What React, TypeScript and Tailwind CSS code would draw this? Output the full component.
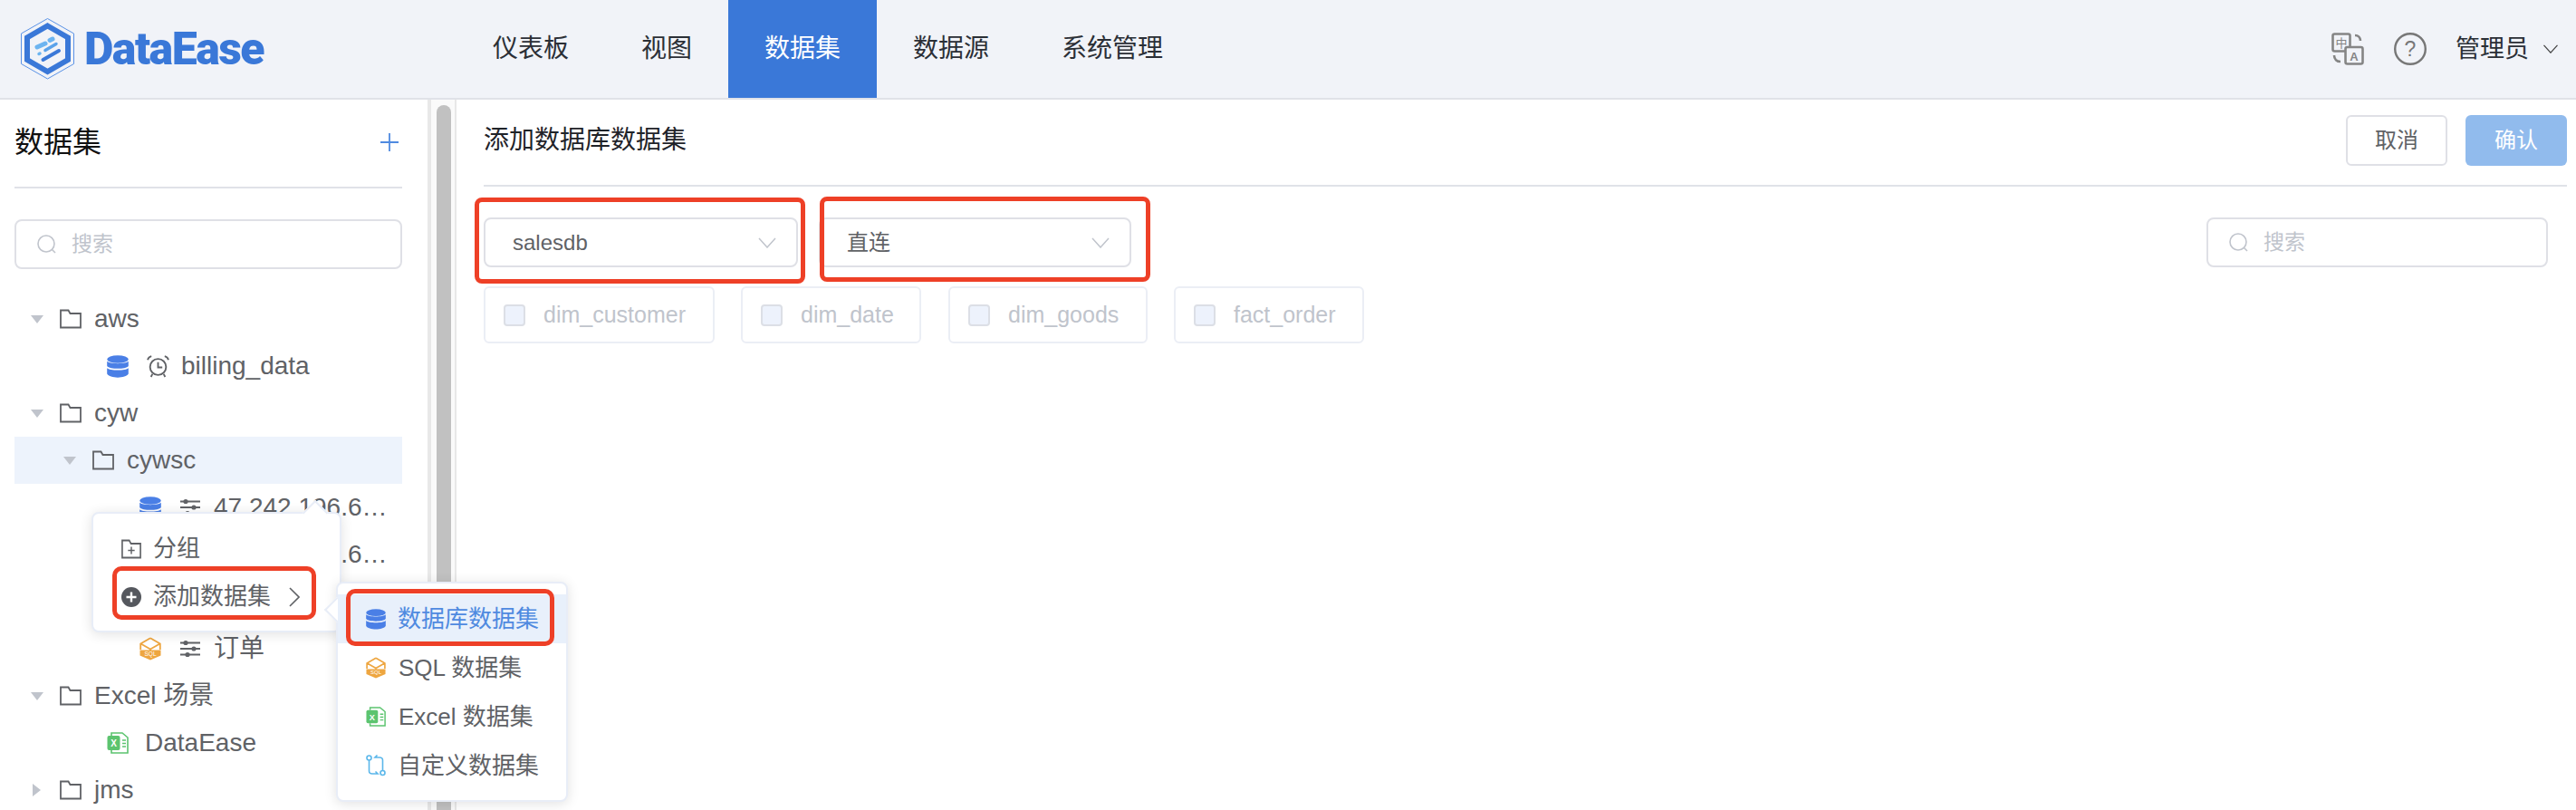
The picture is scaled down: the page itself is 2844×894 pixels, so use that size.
import React from "react";

const Folder = ({ plus = false, w = 24 }: { plus?: boolean; w?: number }) => (
  <svg width={w} height="22" viewBox="0 0 24 22" preserveAspectRatio="none" fill="none" className="shrink-0">
    <path d="M1 20.500V1.500H9.500L11.500 5H23V20.500H1Z" stroke="#606266" strokeWidth="1.800" />
    {plus && <path d="M8 12.500H16M12 8.500V16.500" stroke="#606266" strokeWidth="1.600" />}
  </svg>
);

const Db = ({ size = 24 }: { size?: number }) => (
  <svg width={size} height={size + 1} viewBox="0 0 24 25" className="shrink-0">
    <ellipse cx="12" cy="4.500" rx="11.800" ry="4.300" fill="#4a7fe6" />
    <path d="M.2 6.800C3 10 21 10 23.800 6.800V12C21 15.800 3 15.800 .2 12Z" fill="#4a7fe6" />
    <path d="M.2 14.200C3 17.400 21 17.400 23.800 14.200V20.500C21 26 3 26 .2 20.500Z" fill="#4a7fe6" />
  </svg>
);

const Alarm = () => (
  <svg width="25" height="25" viewBox="0 0 24 24" fill="none" stroke="#606266" strokeWidth="1.800" className="shrink-0">
    <circle cx="12" cy="12.500" r="8.500" />
    <path d="M12 7.500V13H16.500M1 5C1.500 2.500 3 1.500 5 1M23 5C22.500 2.500 21 1.500 19 1M6 20L4.500 23M18 20L19.500 23" />
  </svg>
);

const Sliders = () => (
  <svg width="24" height="20" viewBox="0 0 24 20" fill="none" className="shrink-0">
    <path d="M1 3.500H23M1 10H23M1 16.500H23" stroke="#606266" strokeWidth="1.800" />
    <circle cx="7" cy="3.500" r="2.600" fill="#606266" />
    <circle cx="16" cy="10" r="2.600" fill="#606266" />
    <circle cx="9" cy="16.500" r="2.600" fill="#606266" />
  </svg>
);

const Sql = ({ size = 24 }: { size?: number }) => (
  <svg width={size} height={size + 2} viewBox="0 0 24 26" className="shrink-0">
    <path d="M12 1.200L22.800 7.500V14M1.200 14V7.500L12 1.200M1.500 7.500L12 13.500L22.500 7.500M12 13.500V16" fill="none" stroke="#eea640" strokeWidth="1.800" />
    <path d="M.5 14.500H23.500V20.500L12 25.500L.5 20.500Z" fill="#eea640" />
    <text x="12" y="20.500" textAnchor="middle" fontSize="6.500" fontFamily="Liberation Sans" fill="#fff">SQL</text>
  </svg>
);

const Excel = ({ size = 24 }: { size?: number }) => (
  <svg width={size} height={size + 2} viewBox="0 0 24 26" fill="none" className="shrink-0">
    <path d="M5 5V2H17L23 7V24H5V21" stroke="#5cc46f" strokeWidth="1.600" />
    <rect x=".5" y="5" width="14" height="16" rx="2" fill="#5cc46f" />
    <text x="7.500" y="17" textAnchor="middle" fontSize="10" fontWeight="700" fontFamily="Liberation Sans" fill="#fff">X</text>
    <path d="M17 10H21M17 13.500H21M17 17H21" stroke="#5cc46f" strokeWidth="1.500" />
  </svg>
);

const Custom = () => (
  <svg width="22" height="24" viewBox="0 0 22 24" fill="none" stroke="#5bb7ea" strokeWidth="1.600" className="shrink-0">
    <circle cx="3.500" cy="3.500" r="2.500" />
    <circle cx="18.500" cy="20" r="2.500" />
    <path d="M3.500 6V18C3.500 20 5 21 7 21H13L10.500 18.500M18.500 17.500V6C18.500 4 17 3 15 3H10L12.500 .5" />
  </svg>
);

const Tri = ({ right = false }: { right?: boolean }) =>
  right ? (
    <svg width="14" height="18" viewBox="0 0 14 18" className="shrink-0"><path d="M2 2L11 9L2 16Z" fill="#c0c4cc" /></svg>
  ) : (
    <svg width="14" height="9" viewBox="0 0 14 9" className="shrink-0"><path d="M0 0H14L7 9Z" fill="#c0c4cc" /></svg>
  );

const Chevron = ({ color = "#c0c4cc", w = 20, h = 12 }: { color?: string; w?: number; h?: number }) => (
  <svg width={w} height={h} viewBox="0 0 20 12" fill="none" className="shrink-0">
    <path d="M1 1L10 11L19 1" stroke={color} strokeWidth="1.500" />
  </svg>
);

const Search = ({ className }: { className: string }) => (
  <div className={`flex h-[55px] items-center rounded-lg border-2 border-[#dfe0e6] bg-white pl-[23px] ${className}`}>
    <svg width="21" height="21" viewBox="0 0 21 21" fill="none" stroke="#c0c4cc" strokeWidth="1.600" className="shrink-0">
      <circle cx="10" cy="10" r="9" />
      <path d="M16.500 16.500L20 20" />
    </svg>
    <span className="ml-[17px] text-[23px] text-[#c0c4cc]">搜索</span>
  </div>
);

const Select = ({ label, className }: { label: string; className: string }) => (
  <div className={`flex h-[55px] items-center justify-between rounded-lg border-2 border-[#dfe0e6] bg-white pr-[22px] text-[24px] text-[#606266] ${className}`}>
    <span>{label}</span>
    <Chevron />
  </div>
);

const Card = ({ label, className }: { label: string; className: string }) => (
  <div className={`flex h-[63px] items-center rounded-md border-2 border-[#ebeef5] pl-5 ${className}`}>
    <span className="h-6 w-6 shrink-0 rounded border-2 border-[#dcdfe6] bg-[#edf2fc]" />
    <span className="ml-[20px] text-[25px] text-[#c0c4cc]">{label}</span>
  </div>
);

const Row = ({ children, active = false, className = "" }: { children: React.ReactNode; active?: boolean; className?: string }) => (
  <div className={`flex h-[52px] items-center whitespace-nowrap text-[28px] text-[#606266] ${active ? "bg-[#edf3fc]" : ""} ${className}`}>
    {children}
  </div>
);

const nav = [
  { t: "仪表板", w: "w-[164px]" },
  { t: "视图", w: "w-[136px]" },
  { t: "数据集", w: "w-[164px]", on: true },
  { t: "数据源", w: "w-[164px]" },
  { t: "系统管理", w: "w-[192px]" },
];

export default function App() {
  return (
    <div className="relative flex h-[894px] w-[2844px] flex-col overflow-hidden bg-white font-['Liberation_Sans','Noto_Sans_CJK_SC',sans-serif]">
      <header className="flex h-[110px] shrink-0 items-stretch border-b-2 border-[#e0e2e8] bg-[#f1f3f8]">
        <div className="flex w-[504px] shrink-0 items-center pl-[22px]">
          <svg width="62" height="70" viewBox="22 16 62 70" fill="none" className="shrink-0">
            <path d="M52.500 17.500L81.500 34V67.500L52.500 84L23.500 67.500V34Z" stroke="#5a92e6" strokeWidth="1" />
            <path d="M52.500 25.500L75 38.500V63L52.500 76L30 63V38.500Z" stroke="#3a78d8" strokeWidth="6" />
            <path d="M41 49L50 45M55 41.500L58 40" stroke="#6cb4f0" strokeWidth="5" strokeLinecap="round" />
            <path d="M50 52.500L62 45.500" stroke="#5aa2ea" strokeWidth="3.500" strokeLinecap="round" />
            <path d="M43 56.500L44 56" stroke="#6cb4f0" strokeWidth="3.500" strokeLinecap="round" />
            <path d="M47.500 63L65 53" stroke="#3a78d8" strokeWidth="4" strokeLinecap="round" />
          </svg>
          <span className="ml-[9px] font-['Roboto'] text-[50px] font-black leading-none tracking-[-1.5px] text-[#3a78d8]">DataEase</span>
        </div>
        <nav className="flex text-[28px] text-[#2b2f36]">
          {nav.map((n) => (
            <div key={n.t} className={`flex items-center justify-center ${n.w} ${n.on ? "bg-[#3a78d8] text-white" : ""}`}>
              {n.t}
            </div>
          ))}
        </nav>
        <div className="ml-auto flex items-center pr-[19px]">
          <svg width="36" height="36" viewBox="0 0 36 36" fill="none" stroke="#858585" strokeWidth="2.600" className="shrink-0">
            <rect x="1.500" y="1.500" width="19" height="19" rx="2" />
            <rect x="15.500" y="16" width="19" height="18.500" rx="2" fill="#f1f3f8" />
            <path d="M26 3C29.500 3 32 5.500 32 9M3 25C3 29.500 6 32 10 32" />
            <text x="11" y="16" textAnchor="middle" fontSize="13" fontFamily="Noto Sans CJK SC" fill="#858585" stroke="none">中</text>
            <text x="25" y="31" textAnchor="middle" fontSize="13" fontWeight="700" fontFamily="Liberation Sans" fill="#858585" stroke="none">A</text>
          </svg>
          <svg width="36" height="36" viewBox="0 0 36 36" fill="none" className="ml-[33px] shrink-0">
            <circle cx="18" cy="18" r="16.800" stroke="#777" strokeWidth="2.400" />
            <text x="18" y="26" textAnchor="middle" fontSize="23" fontFamily="Liberation Sans" fill="#777">?</text>
          </svg>
          <span className="ml-[32px] text-[27px] text-[#2b2f36]">管理员</span>
          <span className="ml-[15px]"><Chevron color="#444" w={18} h={10} /></span>
        </div>
      </header>

      <div className="flex min-h-0 flex-1">
        <aside className="w-[472px] shrink-0 pl-4 pr-7">
          <div className="flex h-[98px] items-center justify-between border-b-2 border-[#e0e2e8] pb-0.5 pr-1">
            <span className="text-[32px] text-[#111]">数据集</span>
            <svg width="20" height="20" viewBox="0 0 20 20" stroke="#4f8ae0" strokeWidth="1.800"><path d="M0 10H20M10 0V20" /></svg>
          </div>
          <Search className="mt-[34px]" />
          <div className="mt-[29px]">
            <Row className="pl-[18px]"><Tri /><span className="ml-[18px]"><Folder /></span><span className="ml-[14px]">aws</span></Row>
            <Row className="pl-[102px]"><Db /><span className="ml-5"><Alarm /></span><span className="ml-[13px]">billing_data</span></Row>
            <Row className="pl-[18px]"><Tri /><span className="ml-[18px]"><Folder /></span><span className="ml-[14px]">cyw</span></Row>
            <Row active className="pl-[54px]"><Tri /><span className="ml-[18px]"><Folder /></span><span className="ml-[14px]">cywsc</span></Row>
            <Row className="pl-[138px]"><Db /><span className="ml-5"><Sliders /></span><span className="ml-[14px]">47.242.196.6…</span></Row>
            <Row className="pl-[138px]"><Db /><span className="ml-5"><Sliders /></span><span className="ml-[14px]">47.242.196.6…</span></Row>
            <Row className="pl-[138px]"><Sql /><span className="ml-5"><Sliders /></span></Row>
            <Row className="pl-[138px]"><Sql /><span className="ml-5"><Sliders /></span><span className="ml-[14px]">订单</span></Row>
            <Row className="pl-[18px]"><Tri /><span className="ml-[18px]"><Folder /></span><span className="ml-[14px]">Excel 场景</span></Row>
            <Row className="pl-[102px]"><Excel /><span className="ml-[18px]">DataEase</span></Row>
            <Row className="pl-[18px]"><Tri right /><span className="ml-[18px]"><Folder /></span><span className="ml-[14px]">jms</span></Row>
          </div>
        </aside>

        <div className="flex w-8 shrink-0 justify-center border-l-4 border-r-2 border-[#e8e8e8] bg-[#fafafa] pt-1.5">
          <div className="ml-0.5 h-full w-4 rounded-t-lg bg-[#c1c1c1]" />
        </div>

        <main className="min-w-0 flex-1 pl-[30px] pr-[10px]">
          <div className="flex h-[96px] items-center justify-between border-b-2 border-[#e0e2e8] pb-1">
            <span className="text-[28px] text-[#1f2329]">添加数据库数据集</span>
            <div className="flex gap-5">
              <div className="flex h-[56px] w-[112px] items-center justify-center rounded-md border-2 border-[#dfe0e6] bg-white text-[24px] text-[#606266]">取消</div>
              <div className="flex h-[56px] w-[112px] items-center justify-center rounded-md bg-[#91bbed] text-[24px] text-white">确认</div>
            </div>
          </div>
          <div className="mt-[34px] flex items-start pr-[21px]">
            <Select label="salesdb" className="w-[347px] pl-[30px]" />
            <Select label="直连" className="ml-[23px] w-[345px] pl-[29px]" />
            <Search className="ml-auto w-[377px]" />
          </div>
          <div className="mt-[21px] flex">
            <Card label="dim_customer" className="w-[255px]" />
            <Card label="dim_date" className="ml-[29px] w-[199px]" />
            <Card label="dim_goods" className="ml-[30px] w-[220px]" />
            <Card label="fact_order" className="ml-[29px] w-[210px]" />
          </div>
        </main>
      </div>

      {/* first context menu */}
      <div className="absolute left-[101px] top-[565px] h-[133px] w-[276px] rounded-lg border-2 border-[#e8edf7] bg-white pt-3 text-[26px] text-[#606266] shadow-[0_2px_14px_rgba(0,0,0,0.12)]">
        <div className="absolute -top-[11px] left-[235px] h-5 w-5 rotate-45 border-l-2 border-t-2 border-[#e8edf7] bg-white" />
        <div className="relative flex h-[53px] items-center pl-[31px]">
          <Folder plus w={22} />
          <span className="ml-[13px]">分组</span>
        </div>
        <div className="relative flex h-[53px] items-center pl-[31px]">
          <svg width="22" height="22" viewBox="0 0 22 22" className="shrink-0">
            <circle cx="11" cy="11" r="11" fill="#55585e" />
            <path d="M5.500 11H16.500M11 5.500V16.500" stroke="#fff" strokeWidth="2.400" />
          </svg>
          <span className="ml-[13px]">添加数据集</span>
          <svg width="12" height="22" viewBox="0 0 12 22" fill="none" className="ml-5 shrink-0"><path d="M1 1L11 11L1 21" stroke="#606266" strokeWidth="1.600" /></svg>
        </div>
      </div>

      {/* submenu */}
      <div className="absolute left-[371px] top-[642px] h-[243px] w-[256px] rounded-lg border-2 border-[#e8edf7] bg-white pt-3 text-[26px] text-[#606266] shadow-[0_2px_14px_rgba(0,0,0,0.12)]">
        <div className="absolute -left-[11px] top-[19px] h-5 w-5 rotate-45 border-b-2 border-l-2 border-[#e8edf7] bg-white" />
        <div className="relative flex h-[54px] items-center whitespace-nowrap bg-[#e8f0fb] pl-[31px] text-[#4f8ae0]">
          <Db size={22} />
          <span className="ml-[13px]">数据库数据集</span>
        </div>
        <div className="flex h-[54px] items-center whitespace-nowrap pl-[31px]">
          <Sql size={22} />
          <span className="ml-[14px]">SQL 数据集</span>
        </div>
        <div className="flex h-[54px] items-center whitespace-nowrap pl-[31px]">
          <Excel size={22} />
          <span className="ml-[14px]">Excel 数据集</span>
        </div>
        <div className="flex h-[54px] items-center whitespace-nowrap pl-[31px]">
          <Custom />
          <span className="ml-[13px]">自定义数据集</span>
        </div>
      </div>

      {/* red annotation frames */}
      <div className="absolute left-[124px] top-[625px] h-[59px] w-[225px] rounded-[10px] border-[5px] border-[#ee4027]" />
      <div className="absolute left-[382px] top-[650px] h-[63px] w-[230px] rounded-[10px] border-[5px] border-[#ee4027]" />
      <div className="absolute left-[524px] top-[218px] h-[95px] w-[365px] rounded-[8px] border-[5px] border-[#ee4027]" />
      <div className="absolute left-[905px] top-[217px] h-[94px] w-[365px] rounded-[8px] border-[5px] border-[#ee4027]" />
    </div>
  );
}
